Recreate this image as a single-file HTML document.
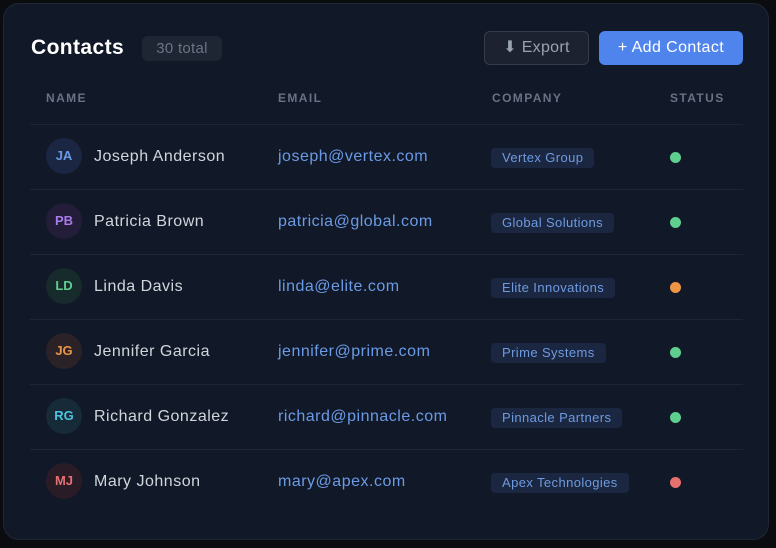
<!DOCTYPE html>
<html><head><style>
*{box-sizing:border-box;margin:0;padding:0}
body{width:776px;height:548px;background:#0b0c10;font-family:"Liberation Sans",Arial,sans-serif;position:relative;overflow:hidden}
.card{position:absolute;left:3px;top:3px;width:766px;height:537px;background:#111827;border:1px solid #1f2633;border-radius:16px}
.abs{position:absolute}
.title{left:27px;top:32px;font-size:21px;font-weight:bold;color:#fff;letter-spacing:0.4px}
.total{left:138px;top:32px;width:80px;height:25px;background:#1e2533;border-radius:6px;color:#6b7587;font-size:15px;line-height:25px;text-align:center;letter-spacing:0.3px}
.exp{left:480px;top:27px;width:105px;height:34px;border:1px solid #343c4b;background:#1c2230;border-radius:6px;color:#9aa3b2;font-size:16px;line-height:32px;text-align:center;letter-spacing:0.3px}
.add{left:595px;top:27px;width:144px;height:34px;background:#4f84ec;border-radius:6px;color:#fff;font-size:16px;line-height:34px;text-align:center;letter-spacing:0.4px}
.th{top:87px;font-size:12px;font-weight:bold;letter-spacing:1.4px;color:#687284}
.row{position:absolute;left:26px;width:713px;height:65px;border-top:1px solid #1e2533}
.av{position:absolute;left:16px;top:13px;width:36px;height:36px;border-radius:50%;font-size:13px;font-weight:bold;text-align:center;line-height:36px}
.nm{position:absolute;left:64px;top:23px;font-size:16px;color:#d1d5dc;letter-spacing:0.5px}
.em{position:absolute;left:248px;top:23px;font-size:16px;color:#6b9be6;letter-spacing:0.5px}
.bd{position:absolute;left:461px;top:23px;height:20px;padding:0 11px;background:#1b2640;border-radius:4px;color:#6e9be0;font-size:13px;line-height:20px;letter-spacing:0.4px}
.dot{position:absolute;left:640px;top:27px;width:11px;height:11px;border-radius:50%}
</style></head><body>
<div class="card">
<div class="abs title">Contacts</div>
<div class="abs total">30 total</div>
<div class="abs exp">⬇ Export</div>
<div class="abs add">+ Add Contact</div>
<div class="abs th" style="left:42px">NAME</div>
<div class="abs th" style="left:274px">EMAIL</div>
<div class="abs th" style="left:488px">COMPANY</div>
<div class="abs th" style="left:666px">STATUS</div>

<div class="row" style="top:120px"><div class="av" style="background:#1b2642;color:#6b9be6">JA</div><div class="nm">Joseph Anderson</div><div class="em">joseph@vertex.com</div><div class="bd">Vertex Group</div><div class="dot" style="background:#5fcf8f"></div></div>
<div class="row" style="top:185px"><div class="av" style="background:#231d3a;color:#a77ce8">PB</div><div class="nm">Patricia Brown</div><div class="em">patricia@global.com</div><div class="bd">Global Solutions</div><div class="dot" style="background:#5fcf8f"></div></div>
<div class="row" style="top:250px"><div class="av" style="background:#172a2c;color:#5fcf8f">LD</div><div class="nm">Linda Davis</div><div class="em">linda@elite.com</div><div class="bd">Elite Innovations</div><div class="dot" style="background:#ee9644"></div></div>
<div class="row" style="top:315px"><div class="av" style="background:#2a2227;color:#ea9446">JG</div><div class="nm">Jennifer Garcia</div><div class="em">jennifer@prime.com</div><div class="bd">Prime Systems</div><div class="dot" style="background:#5fcf8f"></div></div>
<div class="row" style="top:380px"><div class="av" style="background:#172a38;color:#4fc3df">RG</div><div class="nm">Richard Gonzalez</div><div class="em">richard@pinnacle.com</div><div class="bd">Pinnacle Partners</div><div class="dot" style="background:#5fcf8f"></div></div>
<div class="row" style="top:445px"><div class="av" style="background:#2a1c26;color:#e66f6f">MJ</div><div class="nm">Mary Johnson</div><div class="em">mary@apex.com</div><div class="bd">Apex Technologies</div><div class="dot" style="background:#e66f6f"></div></div>
</div>
</body></html>
